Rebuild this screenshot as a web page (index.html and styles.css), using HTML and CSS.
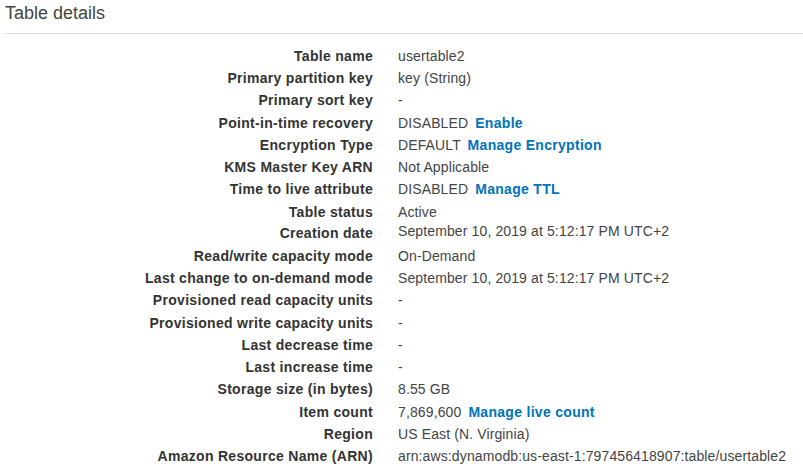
FILE: index.html
```html
<!DOCTYPE html>
<html>
<head>
<meta charset="utf-8">
<link rel="stylesheet" href="styles.css">
</head>
<body>
<div class="panel">
  <h2 class="title">Table details</h2>
  <div class="details">
    <div class="label">Table name</div><div class="value">usertable2</div>
    <div class="label">Primary partition key</div><div class="value">key (String)</div>
    <div class="label">Primary sort key</div><div class="value">-</div>
    <div class="label">Point-in-time recovery</div><div class="value">DISABLED <a class="link">Enable</a></div>
    <div class="label">Encryption Type</div><div class="value">DEFAULT <a class="link">Manage Encryption</a></div>
    <div class="label">KMS Master Key ARN</div><div class="value">Not Applicable</div>
    <div class="label">Time to live attribute</div><div class="value">DISABLED <a class="link">Manage TTL</a></div>
    <div class="label">Table status</div><div class="value">Active</div>
    <div class="label raised-1">Creation date</div><div class="value raised-3">September 10, 2019 at 5:12:17 PM UTC+2</div>
    <div class="label">Read/write capacity mode</div><div class="value">On-Demand</div>
    <div class="label">Last change to on-demand mode</div><div class="value">September 10, 2019 at 5:12:17 PM UTC+2</div>
    <div class="label">Provisioned read capacity units</div><div class="value">-</div>
    <div class="label">Provisioned write capacity units</div><div class="value">-</div>
    <div class="label">Last decrease time</div><div class="value">-</div>
    <div class="label">Last increase time</div><div class="value">-</div>
    <div class="label">Storage size (in bytes)</div><div class="value">8.55 GB</div>
    <div class="label">Item count</div><div class="value">7,869,600 <a class="link">Manage live count</a></div>
    <div class="label">Region</div><div class="value">US East (N. Virginia)</div>
    <div class="label">Amazon Resource Name (ARN)</div><div class="value">arn:aws:dynamodb:us-east-1:797456418907:table/usertable2</div>
  </div>
</div>
</body>
</html>
```
FILE: styles.css
```css
html, body {
  margin: 0;
  padding: 0;
  background: #fff;
}
body {
  font-family: "Liberation Sans", Arial, sans-serif;
  font-size: 14px;
  color: #444;
}
.panel {
  padding: 0 0 0 5px;
}
.title {
  margin: 0;
  padding: 2px 0 9px 0;
  font-size: 18px;
  font-weight: normal;
  line-height: 22px;
  color: #444;
  border-bottom: 1px solid #dcdcdc;
}
.details {
  display: grid;
  grid-template-columns: 368px 1fr;
  column-gap: 25px;
  grid-auto-rows: 22.22px;
  padding-top: 11px;
}
.label {
  text-align: right;
  font-weight: bold;
  color: #333;
  line-height: 22.22px;
  white-space: nowrap;
  letter-spacing: 0.3px;
}
.value {
  line-height: 22.22px;
  white-space: nowrap;
  letter-spacing: 0.12px;
}
.raised-1 {
  position: relative;
  top: -1px;
}
.raised-3 {
  position: relative;
  top: -3px;
}
.link {
  color: #0073bb;
  font-weight: bold;
  margin-left: 3px;
  letter-spacing: 0.3px;
  cursor: pointer;
}
```
